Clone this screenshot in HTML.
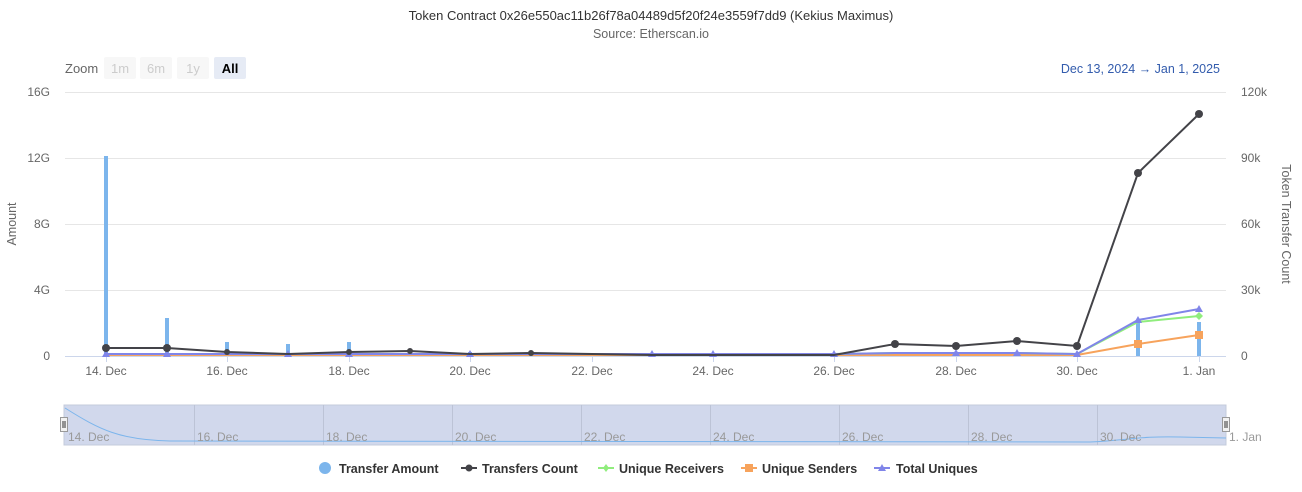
<!DOCTYPE html>
<html><head><meta charset="utf-8"><style>
html,body{margin:0;padding:0;background:#fff;width:1302px;height:492px;overflow:hidden}
svg{display:block;font-family:"Liberation Sans",sans-serif}
</style></head><body>
<svg width="1302" height="492" viewBox="0 0 1302 492" xmlns="http://www.w3.org/2000/svg">
<text x="651" y="20" text-anchor="middle" font-size="13" fill="#333">Token Contract 0x26e550ac11b26f78a04489d5f20f24e3559f7dd9 (Kekius Maximus)</text>
<text x="651" y="38" text-anchor="middle" font-size="12.5" fill="#666">Source: Etherscan.io</text>
<!-- zoom -->
<text x="65" y="73" font-size="13" fill="#666">Zoom</text>
<rect x="104" y="57" width="32" height="22" rx="2" fill="#f7f7f7"/><text x="120" y="73" text-anchor="middle" font-size="13" fill="#ccc">1m</text>
<rect x="140" y="57" width="32" height="22" rx="2" fill="#f7f7f7"/><text x="156" y="73" text-anchor="middle" font-size="13" fill="#ccc">6m</text>
<rect x="177" y="57" width="32" height="22" rx="2" fill="#f7f7f7"/><text x="193" y="73" text-anchor="middle" font-size="13" fill="#ccc">1y</text>
<rect x="214" y="57" width="32" height="22" rx="2" fill="#e6ebf5"/><text x="230" y="73" text-anchor="middle" font-size="13" font-weight="bold" fill="#000">All</text>
<text x="1220" y="73" text-anchor="end" font-size="12.5" fill="#335cad">Dec 13, 2024  →  Jan 1, 2025</text>
<!-- grid -->
<g stroke="#e6e6e6" stroke-width="1">
<line x1="65" y1="92.5" x2="1226" y2="92.5"/><line x1="65" y1="158.5" x2="1226" y2="158.5"/>
<line x1="65" y1="224.5" x2="1226" y2="224.5"/><line x1="65" y1="290.5" x2="1226" y2="290.5"/>
</g>
<line x1="65" y1="356.5" x2="1226" y2="356.5" stroke="#ccd6eb"/>
<g stroke="#ccd6eb"><line x1="106.5" y1="356" x2="106.5" y2="362"/><line x1="227.5" y1="356" x2="227.5" y2="362"/><line x1="349.5" y1="356" x2="349.5" y2="362"/><line x1="470.5" y1="356" x2="470.5" y2="362"/><line x1="592.5" y1="356" x2="592.5" y2="362"/><line x1="713.5" y1="356" x2="713.5" y2="362"/><line x1="834.5" y1="356" x2="834.5" y2="362"/><line x1="956.5" y1="356" x2="956.5" y2="362"/><line x1="1077.5" y1="356" x2="1077.5" y2="362"/><line x1="1199.5" y1="356" x2="1199.5" y2="362"/></g>
<g font-size="12" fill="#666" text-anchor="end">
<text x="50" y="96">16G</text><text x="50" y="162">12G</text><text x="50" y="228">8G</text><text x="50" y="294">4G</text><text x="50" y="360">0</text></g>
<g font-size="12" fill="#666" text-anchor="start">
<text x="1241" y="96">120k</text><text x="1241" y="162">90k</text><text x="1241" y="228">60k</text><text x="1241" y="294">30k</text><text x="1241" y="360">0</text></g>
<text transform="translate(16,224) rotate(-90)" text-anchor="middle" font-size="12.5" fill="#666">Amount</text>
<text transform="translate(1282,224) rotate(90)" text-anchor="middle" font-size="12.5" fill="#666">Token Transfer Count</text>
<g font-size="12" fill="#666" text-anchor="middle">
<text x="106" y="375">14. Dec</text><text x="227" y="375">16. Dec</text><text x="349" y="375">18. Dec</text><text x="470" y="375">20. Dec</text><text x="592" y="375">22. Dec</text><text x="713" y="375">24. Dec</text><text x="834" y="375">26. Dec</text><text x="956" y="375">28. Dec</text><text x="1077" y="375">30. Dec</text><text x="1199" y="375">1. Jan</text></g>
<!-- bars -->
<g fill="#7cb5ec">
<rect x="104" y="156" width="4" height="200"/><rect x="165" y="318" width="4" height="38"/><rect x="225" y="342" width="4" height="14"/><rect x="286" y="344" width="4" height="12"/><rect x="347" y="342" width="4" height="14"/><rect x="408" y="350" width="4" height="6"/><rect x="468" y="352" width="4" height="4"/><rect x="529" y="353" width="4" height="3"/><rect x="590" y="353" width="4" height="3"/><rect x="1136" y="320" width="4" height="36"/><rect x="1197" y="322" width="4" height="34"/></g>
<!-- orange -->
<polyline fill="none" stroke="#f7a35c" stroke-width="2" points="106,355 167,355 227,355 288,355 349,355 410,355 470,355 531,355 592,355 652,355 713,355 774,355 834,355 895,355 956,355 1017,355 1077,355 1138,344 1199,335"/>
<g fill="#f7a35c"><rect x="1134" y="340" width="8" height="8"/><rect x="1195" y="331" width="8" height="8"/></g>
<!-- green -->
<polyline fill="none" stroke="#90ed7d" stroke-width="2" points="106,354 167,354 227,354 288,354 349,354 410,354 470,354 531,354 592,354 652,354 713,354 774,354 834,354 895,353 956,353 1017,353 1077,354 1138,322 1199,316"/>
<g fill="#90ed7d"><path d="M1199 312 l4 4 l-4 4 l-4 -4z"/></g>
<!-- purple -->
<polyline fill="none" stroke="#8085e9" stroke-width="2" points="106,354 167,354 227,354 288,354 349,354 410,354 470,354 531,354 592,354 652,354 713,354 774,354 834,354 895,353 956,353 1017,353 1077,354 1138,320 1199,309"/>
<g fill="#8085e9">
<path d="M106 350l4 7h-8z"/><path d="M167 350l4 7h-8z"/><path d="M288 350l4 7h-8z"/><path d="M349 350l4 7h-8z"/><path d="M470 350l4 7h-8z"/><path d="M652 350l4 7h-8z"/><path d="M713 350l4 7h-8z"/><path d="M834 350l4 7h-8z"/><path d="M956 349l4 7h-8z"/><path d="M1017 349l4 7h-8z"/><path d="M1077 350l4 7h-8z"/><path d="M1138 316l4 7h-8z"/><path d="M1199 305l4 7h-8z"/></g>
<!-- black -->
<polyline fill="none" stroke="#434348" stroke-width="2" points="106,348 167,348 227,352 288,354 349,352 410,351 470,354 531,353 592,354 652,355 713,355 774,355 834,355 895,344 956,346 1017,341 1077,346 1138,173 1199,114"/>
<g fill="#434348"><circle cx="106" cy="348" r="4"/><circle cx="167" cy="348" r="4"/><circle cx="227" cy="352" r="3"/><circle cx="349" cy="352" r="3"/><circle cx="410" cy="351" r="3"/><circle cx="531" cy="353" r="3"/><circle cx="895" cy="344" r="4"/><circle cx="956" cy="346" r="4"/><circle cx="1017" cy="341" r="4"/><circle cx="1077" cy="346" r="4"/><circle cx="1138" cy="173" r="4"/><circle cx="1199" cy="114" r="4"/></g>
<!-- navigator -->
<rect x="64" y="405" width="1162" height="40" fill="#d1d8ec" stroke="#c4cbdb"/>
<g stroke="#bcc3d6"><line x1="194.5" y1="405" x2="194.5" y2="445"/><line x1="323.5" y1="405" x2="323.5" y2="445"/><line x1="452.5" y1="405" x2="452.5" y2="445"/><line x1="581.5" y1="405" x2="581.5" y2="445"/><line x1="710.5" y1="405" x2="710.5" y2="445"/><line x1="839.5" y1="405" x2="839.5" y2="445"/><line x1="968.5" y1="405" x2="968.5" y2="445"/><line x1="1097.5" y1="405" x2="1097.5" y2="445"/></g>
<path d="M65 408 C100 430,120 440,170 441 L1090 442 C1130 440,1140 436,1180 437 L1226 438" fill="none" stroke="#7cb5ec" stroke-width="1"/>
<g font-size="12" fill="#999">
<text x="68" y="441">14. Dec</text><text x="197" y="441">16. Dec</text><text x="326" y="441">18. Dec</text><text x="455" y="441">20. Dec</text><text x="584" y="441">22. Dec</text><text x="713" y="441">24. Dec</text><text x="842" y="441">26. Dec</text><text x="971" y="441">28. Dec</text><text x="1100" y="441">30. Dec</text><text x="1229" y="441">1. Jan</text></g>
<g fill="#f2f2f2" stroke="#999"><rect x="60.5" y="417.5" width="7" height="14"/><rect x="1222.5" y="417.5" width="7" height="14"/></g>
<g stroke="#333"><line x1="63" y1="421" x2="63" y2="428"/><line x1="65" y1="421" x2="65" y2="428"/><line x1="1225" y1="421" x2="1225" y2="428"/><line x1="1227" y1="421" x2="1227" y2="428"/></g>
<!-- legend -->
<g font-size="12.5" font-weight="bold" fill="#333">
<circle cx="325" cy="468" r="6" fill="#7cb5ec"/><text x="339" y="473">Transfer Amount</text>
<line x1="461" y1="468" x2="477" y2="468" stroke="#434348" stroke-width="2"/><circle cx="469" cy="468" r="3.5" fill="#434348"/><text x="482" y="473">Transfers Count</text>
<line x1="598" y1="468" x2="614" y2="468" stroke="#90ed7d" stroke-width="2"/><path d="M606 464l3 4-3 4-3-4z" fill="#90ed7d"/><text x="619" y="473">Unique Receivers</text>
<line x1="741" y1="468" x2="757" y2="468" stroke="#f7a35c" stroke-width="2"/><rect x="745" y="464" width="8" height="8" fill="#f7a35c"/><text x="762" y="473">Unique Senders</text>
<line x1="874" y1="468" x2="890" y2="468" stroke="#8085e9" stroke-width="2"/><path d="M882 464l4 7h-8z" fill="#8085e9"/><text x="896" y="473">Total Uniques</text>
</g>
</svg>
</body></html>
